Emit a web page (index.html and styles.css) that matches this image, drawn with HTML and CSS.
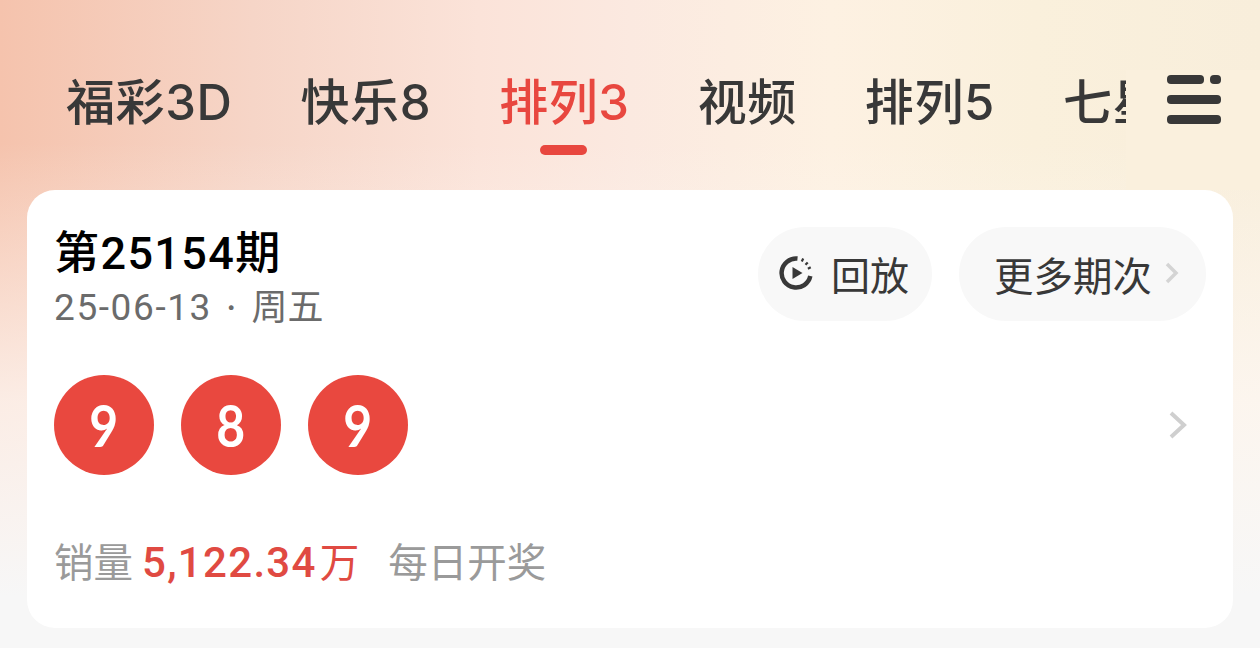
FILE: index.html
```html
<!DOCTYPE html>
<html lang="zh-CN">
<head>
<meta charset="utf-8">
<title>排列3</title>
<link rel="stylesheet" href="styles.css">
</head>
<body>
<div class="page">
  <header class="tabbar">
    <nav class="tabs">
      <a class="tab">福彩3D</a>
      <a class="tab">快乐8</a>
      <a class="tab active">排列3</a>
      <a class="tab">视频</a>
      <a class="tab">排列5</a>
      <a class="tab">七星彩</a>
    </nav>
    <div class="menu">
      <svg class="menu-icon" width="54" height="50" viewBox="0 0 54 50">
        <g fill="#383838">
          <rect x="0" y="0" width="37" height="9" rx="4"/>
          <rect x="43" y="0" width="11" height="9" rx="4"/>
          <rect x="0" y="20" width="54" height="9" rx="4"/>
          <rect x="0" y="40" width="54" height="9" rx="4"/>
        </g>
      </svg>
    </div>
  </header>
  <main class="card">
    <section class="head">
      <div class="issue">
        <h1 class="issue-no">第25154期</h1>
        <p class="issue-date"><span class="date-num">25-06-13</span><span class="date-dot">·</span><span>周五</span></p>
      </div>
      <div class="actions">
        <a class="pill replay">
          <svg class="replay-icon" width="34" height="34" viewBox="0 0 34 34">
            <path d="M18.500 2.600A14.500 14.500 0 1 0 31.300 20" fill="none" stroke="#383838" stroke-width="4.500"/>
            <path d="M22.500 3.500l2 1M26.800 6.800l1.600 1.600M29.800 11l1 2" fill="none" stroke="#383838" stroke-width="3.200"/>
            <path d="M13.500 11L23.500 17l-10 6z" fill="#383838"/>
          </svg>
          <span>回放</span>
        </a>
        <a class="pill more">
          <span>更多期次</span>
          <svg width="14" height="22" viewBox="0 0 14 22"><path d="M2 2l9 9-9 9" fill="none" stroke="#d4d4d4" stroke-width="3.500"/></svg>
        </a>
      </div>
    </section>
    <section class="draw">
      <div class="balls">
        <span class="ball"><span class="ball-digit">9</span></span>
        <span class="ball"><span class="ball-digit">8</span></span>
        <span class="ball"><span class="ball-digit">9</span></span>
      </div>
      <svg class="draw-arrow" width="20" height="30" viewBox="0 0 20 30"><path d="M3 3l13 12L3 27" fill="none" stroke="#cfcfcf" stroke-width="4"/></svg>
    </section>
    <footer class="sales">
      <span class="sales-label">销量</span>
      <strong class="sales-num">5,122.34<span class="sales-unit">万</span></strong>
      <span class="sales-freq">每日开奖</span>
    </footer>
  </main>
</div>
</body>
</html>
```
FILE: styles.css
```css
* { box-sizing: border-box; margin: 0; padding: 0; }
html, body { width: 1260px; height: 648px; overflow: hidden; }
body {
  font-family: Inter, "Noto Sans CJK SC", sans-serif;
  background:
    linear-gradient(180deg, rgba(250,247,245,0) 22%, rgba(253,247,243,.8) 62%, #f7f7f7 92%),
    linear-gradient(90deg, #f5c3ad 0%, #f6d5c7 20%, #fbe3d9 38%, #fbe9e0 50%, #fdf1e2 66%, #faf0dc 82%, #f8eedb 100%);
}
.page { padding-top: 70px; }
.tabbar { display: flex; height: 120px; }
.tabs {
  display: flex;
  gap: 68px;
  width: 1126px;
  padding-left: 66px;
  overflow: hidden;
  flex: none;
}
.tab {
  position: relative;
  flex: none;
  font-size: 49px;
  font-weight: 500;
  letter-spacing: .6px;
  line-height: 66px;
  color: #383838;
  white-space: nowrap;
}
.tab.active { color: #e8473f; }
.tab.active::after {
  content: "";
  position: absolute;
  left: 41px;
  top: 75px;
  width: 47px;
  height: 10px;
  border-radius: 5px;
  background: #e8473f;
}
.menu {
  flex: 1;
  background: #faf0dd;
  padding: 5px 0 0 41px;
}
.menu-icon { display: block; }
.card {
  margin: 0 27px;
  height: 438px;
  background: #fff;
  border-radius: 28px;
  padding: 37px 27px 0 27px;
}
.head { display: flex; justify-content: space-between; align-items: flex-start; }
.issue-no {
  font-family: Roboto, "Noto Sans CJK SC", sans-serif;
  font-size: 45px;
  font-weight: 500;
  letter-spacing: 1.400px;
  line-height: 50px;
  color: #000;
  margin-top: 2px;
}
.issue-date {
  font-size: 36px;
  line-height: 48px;
  color: #6b6b6b;
  margin-top: 4px;
}
.date-num { font-family: Roboto, sans-serif; font-size: 37px; letter-spacing: 1.600px; }
.date-dot { margin: 0 15px 0 14px; }
.actions { display: flex; gap: 27px; }
.pill {
  display: flex;
  align-items: center;
  height: 94px;
  border-radius: 47px;
  background: #f8f8f8;
  color: #383838;
  padding-bottom: 2px;
}
.replay { padding-left: 21px; padding-right: 23px; gap: 18px; font-size: 39px; }
.more { padding-left: 35px; padding-right: 27px; gap: 13px; font-size: 39.500px; }
.draw {
  display: flex;
  justify-content: space-between;
  align-items: center;
  margin-top: 43px;
  padding-right: 18px;
}
.balls { display: flex; gap: 27px; }
.ball {
  width: 100px;
  height: 100px;
  border-radius: 50%;
  background: #e9483f;
  color: #fff;
  font-family: Lato, sans-serif;
  font-size: 58px;
  font-weight: 700;
  line-height: 100px;
  text-align: center;
}
.ball-digit { display: inline-block; transform: scaleX(.86); }
.sales {
  display: flex;
  align-items: baseline;
  margin-top: 62px;
  font-size: 39.500px;
  line-height: 52px;
  color: #9a9a9a;
}
.sales-num {
  font-family: Roboto, "Noto Sans CJK SC", sans-serif;
  margin-left: 9px;
  color: #e04a42;
  font-weight: 500;
  font-size: 42px;
  letter-spacing: 1.300px;
}
.sales-unit { font-weight: 400; font-size: 39.500px; margin-left: 3px; letter-spacing: 0; }
.sales-freq { margin-left: 29px; }
```
